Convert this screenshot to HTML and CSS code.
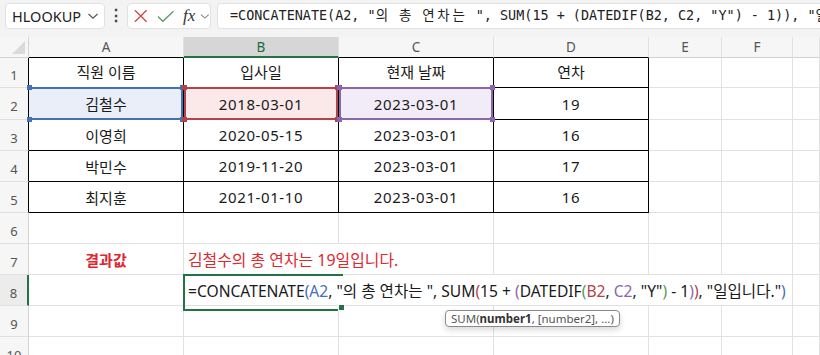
FILE: index.html
```html
<!DOCTYPE html>
<html>
<head>
    <meta charset="UTF-8">
    <title>연차 계산</title>
    <link rel="stylesheet" href="styles.css">
</head>
<body>
<div class="toolbar">
    <div class="namebox">
        <span>HLOOKUP</span>
        <svg width="12" height="8" viewBox="0 0 12 8"><path d="M1.5 2 L6 6.2 L10.5 2" fill="none" stroke="#555" stroke-width="1.2"/></svg>
    </div>
    <div class="dots">⋮</div>
    <div class="fxbox">
        <svg class="ico-x" width="14" height="14" viewBox="0 0 14 14"><path d="M1 1 L13 13 M13 1 L1 13" fill="none" stroke="#d24b4b" stroke-width="1.4"/></svg>
        <svg class="ico-ok" width="18" height="13" viewBox="0 0 18 13"><path d="M1 6.5 L6 11.5 L17 1" fill="none" stroke="#5a9e68" stroke-width="1.4"/></svg>
        <span class="fx">fx</span>
        <svg width="10" height="7" viewBox="0 0 10 7"><path d="M1 1.5 L5 5.2 L9 1.5" fill="none" stroke="#888" stroke-width="1.1"/></svg>
    </div>
    <div class="formula">=CONCATENATE(A2, "<span class="w">의</span> <span class="w">총</span> <span class="w">연차는</span> ", SUM(15 + (DATEDIF(B2, C2, "Y") - 1)), "<span class="w">일입니다</span>.")</div>
</div>

<div class="sheet">
    <div class="row head">
        <div class="corner"></div>
        <div class="ch tb">A</div>
        <div class="ch sel">B</div>
        <div class="ch tb">C</div>
        <div class="ch tb">D</div>
        <div class="ch">E</div>
        <div class="ch">F</div>
        <div class="ch"></div>
    </div>
    <div class="row r1">
        <div class="rh tb">1</div>
        <div class="t">직원 이름</div>
        <div class="t">입사일</div>
        <div class="t">현재 날짜</div>
        <div class="t">연차</div>
        <div></div><div></div><div></div>
    </div>
    <div class="row r2">
        <div class="rh tb">2</div>
        <div class="t hl blue">김철수</div>
        <div class="t num hl red">2018-03-01</div>
        <div class="t num hl purple">2023-03-01</div>
        <div class="t num">19</div>
        <div></div><div></div><div></div>
    </div>
    <div class="row">
        <div class="rh tb">3</div>
        <div class="t">이영희</div>
        <div class="t num">2020-05-15</div>
        <div class="t num">2023-03-01</div>
        <div class="t num">16</div>
        <div></div><div></div><div></div>
    </div>
    <div class="row">
        <div class="rh tb">4</div>
        <div class="t">박민수</div>
        <div class="t num">2019-11-20</div>
        <div class="t num">2023-03-01</div>
        <div class="t num">17</div>
        <div></div><div></div><div></div>
    </div>
    <div class="row">
        <div class="rh tb">5</div>
        <div class="t">최지훈</div>
        <div class="t num">2021-01-10</div>
        <div class="t num">2023-03-01</div>
        <div class="t num">16</div>
        <div></div><div></div><div></div>
    </div>
    <div class="row">
        <div class="rh">6</div>
        <div></div><div></div><div></div><div></div><div></div><div></div><div></div>
    </div>
    <div class="row">
        <div class="rh">7</div>
        <div class="label">결과값</div>
        <div class="result">김철수의 총 연차는 19일입니다.</div>
        <div></div><div></div><div></div><div></div>
    </div>
    <div class="row">
        <div class="rh active">8</div>
        <div></div>
        <div class="edit">
            <span>=CONCATENATE<b class="c1">(</b><b class="c1">A2</b>, "의 총 연차는 ", SUM<b class="c2">(</b>15 + <b class="c3">(</b>DATEDIF<b class="c4">(</b><b class="c2">B2</b>, <b class="c3">C2</b>, "Y"<b class="c4">)</b> - 1<b class="c3">)</b><b class="c2">)</b>, "일입니다."<b class="c1">)</b></span>
            <div class="tip">SUM(<b>number1</b>, [number2], ...)</div>
        </div>
        <div></div>
    </div>
    <div class="row">
        <div class="rh">9</div>
        <div></div><div></div><div></div><div></div><div></div><div></div><div></div>
    </div>
    <div class="row">
        <div class="rh">10</div>
        <div></div><div></div><div></div><div></div><div></div><div></div><div></div>
    </div>
</div>
</body>
</html>
```

FILE: styles.css
```css
* {
    margin: 0;
    padding: 0;
    box-sizing: border-box;
}

body {
    width: 820px;
    height: 355px;
    overflow: hidden;
    background: #fff;
    font-family: "Noto Sans", "Noto Sans CJK KR", sans-serif;
    color: #222;
}

/* formula bar */
.toolbar {
    display: flex;
    align-items: flex-start;
    height: 37px;
    padding: 3px 0 0 5px;
    background: #f3f3f3;
}
.namebox {
    display: flex;
    align-items: center;
    justify-content: space-between;
    width: 100px;
    height: 26px;
    padding: 0 5px 0 6px;
    background: #fff;
    border: 1px solid #e2e2e2;
    border-radius: 4px;
    font-size: 14.5px;
    color: #222;
}
.dots {
    width: 22px;
    height: 26px;
    line-height: 25px;
    text-align: center;
    font-size: 16px;
    font-weight: bold;
    color: #444;
}
.fxbox {
    display: flex;
    align-items: center;
    width: 84px;
    height: 26px;
    padding: 0 0 0 6px;
    background: #fff;
    border: 1px solid #e2e2e2;
    border-radius: 4px;
}
.fxbox .ico-x {
    margin-right: 9px;
}
.fxbox .ico-ok {
    margin-right: 9px;
}
.fxbox .fx {
    font-family: "Liberation Serif", serif;
    font-style: italic;
    font-size: 17px;
    color: #333;
    margin-right: 5px;
    line-height: 20px;
}
.formula {
    flex: 1;
    height: 26px;
    margin-left: 6px;
    padding-left: 12px;
    background: #fff;
    border: 1px solid #e2e2e2;
    border-right: none;
    border-radius: 4px 0 0 4px;
    font-family: "DejaVu Sans Mono", "Noto Sans CJK KR", monospace;
    font-size: 13.45px;
    line-height: 24px;
    white-space: nowrap;
    overflow: hidden;
    color: #222;
}
.formula .w {
    letter-spacing: 2.8px;
}

/* grid */
.row {
    display: grid;
    grid-template-columns: 29px 155px 155px 155px 155px 73px 71px 27px;
    height: 31px;
}
.row > div {
    display: flex;
    align-items: center;
    justify-content: center;
    border-right: 1px solid #e1e1e1;
    border-bottom: 1px solid #e1e1e1;
}
.row.head {
    height: 21px;
    background: #f6f6f6;
}
.row.r1 {
    height: 30px;
}
.row.r2 {
    height: 32px;
}
.head > div {
    border-bottom-color: #d2d2d2;
    color: #555;
    font-size: 13.5px;
}
.head .corner {
    position: relative;
    border-right-color: #d2d2d2;
}
.head .corner::after {
    content: "";
    position: absolute;
    right: 3px;
    bottom: 3px;
    border-left: 13px solid transparent;
    border-bottom: 13px solid #dadada;
}
.head .ch.tb {
    border-bottom-color: #000;
}
.head .ch.sel {
    background: #d6d6d6;
    color: #1e6b3f;
    border-bottom: 2px solid #217346;
}
.rh {
    background: #f6f6f6;
    color: #555;
    font-size: 13px;
    padding-top: 5px;
    border-right-color: #d2d2d2 !important;
}
.rh.tb {
    border-right-color: #000 !important;
}
.rh.active {
    background: #ececec;
    border-right: 2px solid #217346 !important;
}

/* table */
.t {
    font-size: 15px;
    color: #1a1a1a;
    border-right-color: #000 !important;
    border-bottom-color: #000 !important;
}
.r1 .t {
    padding-bottom: 3px;
}
.t.num {
    letter-spacing: 0.6px;
}

/* reference highlights */
.hl {
    position: relative;
}
.hl::after {
    content: "";
    position: absolute;
    top: -1px;
    left: 0;
    right: 0;
    bottom: -1px;
    border: 2px solid var(--c);
}
.hl::before {
    content: "";
    position: absolute;
    top: -3px;
    left: -2px;
    right: -2px;
    bottom: -3px;
    z-index: 1;
    background:
        linear-gradient(var(--c), var(--c)) left top / 5px 5px no-repeat,
        linear-gradient(var(--c), var(--c)) right top / 5px 5px no-repeat,
        linear-gradient(var(--c), var(--c)) left bottom / 5px 5px no-repeat,
        linear-gradient(var(--c), var(--c)) right bottom / 5px 5px no-repeat;
}
.hl.blue {
    --c: #4470b8;
    background: #e9eef9;
}
.hl.blue::after {
    border-left: none;
}
.hl.red {
    --c: #b4424b;
    background: #fbe9e9;
}
.hl.purple {
    --c: #8a66ad;
    background: #f1ecf8;
}

/* result rows */
.label {
    font-size: 15px;
    font-weight: bold;
    color: #e1252d;
}
.row > .result {
    grid-column: 3 / 5;
    justify-content: flex-start;
    padding-left: 4px;
    font-size: 15.9px;
    color: #de2a2f;
}
.row > .edit {
    position: relative;
    grid-column: 3 / 8;
    justify-content: flex-start;
    padding-left: 4px;
    background: #fff;
    font-size: 15.6px;
    white-space: nowrap;
    color: #1a1a1a;
}
.edit::before {
    content: "";
    position: absolute;
    top: -1px;
    left: -1px;
    width: 158px;
    height: 33px;
    border: 2px solid #217346;
    border-right: none;
}
.edit::after {
    content: "";
    position: absolute;
    top: 29px;
    left: 154px;
    width: 5px;
    height: 5px;
    background: #217346;
    border: 1px solid #fff;
}
.edit b {
    font-weight: normal;
}
.edit .c1 {
    color: #4470b8;
}
.edit .c2 {
    color: #b4424b;
}
.edit .c3 {
    color: #8a66ad;
}
.edit .c4 {
    color: #4f9a5c;
}
.tip {
    position: absolute;
    top: 35px;
    left: 261px;
    z-index: 2;
    height: 17px;
    padding: 0 5px;
    background: #fff;
    border: 1px solid #8a8a8a;
    border-radius: 4px;
    box-shadow: 0 3px 6px rgba(0, 0, 0, 0.15);
    font-size: 11.5px;
    line-height: 15px;
    color: #555;
}
.tip b {
    color: #333;
    font-weight: bold;
}
```
